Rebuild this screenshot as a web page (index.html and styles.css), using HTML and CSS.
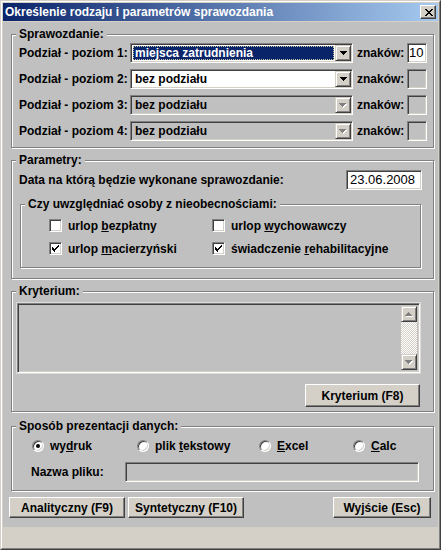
FILE: index.html
```html
<!DOCTYPE html>
<html lang="pl">
<head>
<meta charset="utf-8">
<title>Określenie rodzaju i parametrów sprawozdania</title>
<link rel="stylesheet" href="styles.css">
</head>
<body>
<div class="window">
  <div class="frame">
    <div class="titlebar">
      <span class="title">Określenie rodzaju i parametrów sprawozdania</span>
      <span class="close-btn"><svg width="8" height="7" viewBox="0 0 8 7"><path d="M0 0h2v1H0zM6 0h2v1H6zM1 1h2v1H1zM5 1h2v1H5zM2 2h4v1H2zM3 3h2v1H3zM2 4h4v1H2zM1 5h2v1H1zM5 5h2v1H5zM0 6h2v1H0zM6 6h2v1H6z" fill="#000"/></svg></span>
    </div>
    <div class="panel">
      <fieldset class="group g1">
        <legend>Sprawozdanie:</legend>
        <div class="level-row">
          <span class="level-label">Podział - poziom 1:</span>
          <div class="combo">
            <div class="combo-value selected"><span>miejsca zatrudnienia</span></div>
            <span class="combo-arrow"><svg width="7" height="4" viewBox="0 0 7 4"><path d="M0 0h7v1H0zM1 1h5v1H1zM2 2h3v1H2zM3 3h1v1H3z" fill="#000"/></svg></span>
          </div>
          <span class="chars-label">znaków:</span>
          <span class="field chars-field">10</span>
        </div>
        <div class="level-row">
          <span class="level-label">Podział - poziom 2:</span>
          <div class="combo">
            <div class="combo-value"><span>bez podziału</span></div>
            <span class="combo-arrow"><svg width="7" height="4" viewBox="0 0 7 4"><path d="M0 0h7v1H0zM1 1h5v1H1zM2 2h3v1H2zM3 3h1v1H3z" fill="#000"/></svg></span>
          </div>
          <span class="chars-label">znaków:</span>
          <span class="field chars-field disabled"></span>
        </div>
        <div class="level-row">
          <span class="level-label">Podział - poziom 3:</span>
          <div class="combo disabled">
            <div class="combo-value"><span>bez podziału</span></div>
            <span class="combo-arrow"><svg width="8" height="5" viewBox="0 0 8 5"><path d="M1 1h7v1H1zM2 2h5v1H2zM3 3h3v1H3zM4 4h1v1H4z" fill="#fff"/><path d="M0 0h7v1H0zM1 1h5v1H1zM2 2h3v1H2zM3 3h1v1H3z" fill="#808080"/></svg></span>
          </div>
          <span class="chars-label">znaków:</span>
          <span class="field chars-field disabled"></span>
        </div>
        <div class="level-row">
          <span class="level-label">Podział - poziom 4:</span>
          <div class="combo disabled">
            <div class="combo-value"><span>bez podziału</span></div>
            <span class="combo-arrow"><svg width="8" height="5" viewBox="0 0 8 5"><path d="M1 1h7v1H1zM2 2h5v1H2zM3 3h3v1H3zM4 4h1v1H4z" fill="#fff"/><path d="M0 0h7v1H0zM1 1h5v1H1zM2 2h3v1H2zM3 3h1v1H3z" fill="#808080"/></svg></span>
          </div>
          <span class="chars-label">znaków:</span>
          <span class="field chars-field disabled"></span>
        </div>
      </fieldset>

      <fieldset class="group g2">
        <legend>Parametry:</legend>
        <div class="date-row">
          <span>Data na którą będzie wykonane sprawozdanie:</span>
          <span class="field date-field">23.06.2008</span>
        </div>
        <fieldset class="group inner">
          <legend>Czy uwzględniać osoby z nieobecnościami:</legend>
          <div class="checks">
            <label class="check"><span class="box"></span><span class="opt-text">urlop <u>b</u>ezpłatny</span></label>
            <label class="check"><span class="box"></span><span class="opt-text">urlop <u>w</u>ychowawczy</span></label>
            <label class="check"><span class="box"><svg width="7" height="7" viewBox="0 0 7 7"><path d="M6 0h1v1H6zM5 1h2v1H5zM0 2h1v1H0zM4 2h2v1H4zM0 3h2v1H0zM3 3h2v1H3zM0 4h4v1H0zM1 5h2v1H1zM2 6h1v1H2z" fill="#000"/></svg></span><span class="opt-text">urlop <u>m</u>acierzyński</span></label>
            <label class="check"><span class="box"><svg width="7" height="7" viewBox="0 0 7 7"><path d="M6 0h1v1H6zM5 1h2v1H5zM0 2h1v1H0zM4 2h2v1H4zM0 3h2v1H0zM3 3h2v1H3zM0 4h4v1H0zM1 5h2v1H1zM2 6h1v1H2z" fill="#000"/></svg></span><span class="opt-text">świadczenie <u>r</u>ehabilitacyjne</span></label>
          </div>
        </fieldset>
      </fieldset>

      <fieldset class="group g3">
        <legend>Kryterium:</legend>
        <div class="listbox">
          <div class="list-area"></div>
          <div class="scrollbar">
            <span class="sb-btn"><svg width="8" height="5" viewBox="0 0 8 5"><path d="M4 1h1v1H4zM3 2h3v1H3zM2 3h5v1H2zM1 4h7v1H1z" fill="#fff"/><path d="M3 0h1v1H3zM2 1h3v1H2zM1 2h5v1H1zM0 3h7v1H0z" fill="#808080"/></svg></span>
            <span class="sb-track"></span>
            <span class="sb-btn"><svg width="8" height="5" viewBox="0 0 8 5"><path d="M1 1h7v1H1zM2 2h5v1H2zM3 3h3v1H3zM4 4h1v1H4z" fill="#fff"/><path d="M0 0h7v1H0zM1 1h5v1H1zM2 2h3v1H2zM3 3h1v1H3z" fill="#808080"/></svg></span>
          </div>
        </div>
        <div class="crit-row">
          <button class="btn crit-btn">Kryterium (F8)</button>
        </div>
      </fieldset>

      <fieldset class="group g4">
        <legend>Sposób prezentacji danych:</legend>
        <div class="radios">
          <label class="radio"><span class="dot on"></span><span class="opt-text">wy<u>d</u>ruk</span></label>
          <label class="radio"><span class="dot"></span><span class="opt-text">plik <u>t</u>ekstowy</span></label>
          <label class="radio"><span class="dot"></span><span class="opt-text"><u>E</u>xcel</span></label>
          <label class="radio"><span class="dot"></span><span class="opt-text"><u>C</u>alc</span></label>
        </div>
        <div class="file-row">
          <span class="file-label">Nazwa pliku:</span>
          <span class="field file-field disabled"></span>
        </div>
      </fieldset>

      <div class="buttons">
        <button class="btn w116">Analityczny (F9)</button>
        <button class="btn w116">Syntetyczny (F10)</button>
        <button class="btn exit-btn">Wyjście (Esc)</button>
      </div>
    </div>
  </div>
</div>
</body>
</html>
```

FILE: styles.css
```css
* { box-sizing: border-box; }

html, body {
  margin: 0;
  padding: 0;
  background: #d4d0c8;
}

body {
  font: bold 12px "Liberation Sans", Arial, sans-serif;
  color: #000;
}

.window {
  width: 441px;
  height: 550px;
  border: 1px solid;
  border-color: #d4d0c8 #404040 #404040 #d4d0c8;
  background: #d4d0c8;
  display: flex;
  flex-direction: column;
}

.frame {
  flex: 1;
  border: 1px solid;
  border-color: #fff #808080 #808080 #fff;
  padding: 1px;
  display: flex;
  flex-direction: column;
}

.titlebar {
  height: 18px;
  flex: none;
  background: linear-gradient(90deg, #0a246a 0%, #a6caf0 100%);
  color: #fff;
  display: flex;
  align-items: center;
  justify-content: space-between;
  padding: 0 2px 0 2px;
}

.title {
  font-weight: bold;
  font-size: 12px;
  line-height: 14px;
  white-space: nowrap;
}

.close-btn {
  width: 16px;
  height: 14px;
  background: #d4d0c8;
  border: 1px solid;
  border-color: #fff #404040 #404040 #fff;
  box-shadow: inset -1px -1px 0 #808080;
  display: flex;
  align-items: center;
  justify-content: center;
  padding-left: 1px;
}
.close-btn svg { display: block; }

.panel {
  margin-top: 1px;
  height: 505px;
  flex: none;
  background: #c0c0c0;
  padding: 0 4px 0 8px;
  display: flex;
  flex-direction: column;
}

/* group boxes */
.group {
  margin: 0;
  min-width: 0;
  border: 1px solid #808080;
  box-shadow: inset 1px 1px 0 #fff, 1px 1px 0 #fff;
}

.group legend {
  padding: 0 3px;
  margin-left: -3px;
  line-height: 13px;
  background: #c0c0c0;
  white-space: nowrap;
}

.g1 { margin-top: 6px; padding: 2px 6px 6px 7px; }
.g2 { margin-top: 6px; padding: 3px 11px 10px 7px; }
.g3 { margin-top: 6px; padding: 5px 13px 4px 5px; }
.g3 legend { margin-left: -1px; }
.g4 { margin-top: 8px; padding: 7px 13px 8px 7px; }
.inner { margin: 8px 1px 0; padding: 8px 7px 12px 7px; }

/* sunken fields */
.field {
  display: block;
  height: 20px;
  background: #fff;
  border: 1px solid;
  border-color: #808080 #fff #fff #808080;
  box-shadow: inset 1px 1px 0 #404040, inset -1px -1px 0 #d4d0c8;
  font-weight: normal;
  font-size: 13px;
  line-height: 18px;
}
.field.disabled { background: #c0c0c0; }

/* level rows */
.level-row {
  display: flex;
  align-items: center;
  height: 20px;
}
.level-row + .level-row { margin-top: 6px; }

.level-label {
  width: 111px;
  flex: none;
  white-space: nowrap;
}

.combo {
  width: 223px;
  height: 20px;
  flex: none;
  display: flex;
  padding: 1px;
  background: #fff;
  border: 1px solid;
  border-color: #808080 #fff #fff #808080;
  box-shadow: inset 1px 1px 0 #404040, inset -1px -1px 0 #d4d0c8;
}
.combo.disabled { background: #c0c0c0; }

.combo-value {
  flex: 1;
  padding: 1px;
  display: flex;
  min-width: 0;
}
.combo-value span {
  flex: 1;
  padding-left: 2px;
  line-height: 14px;
  white-space: nowrap;
}
.combo-value.selected span {
  background: #0a246a;
  color: #fff;
  outline: 1px dotted #c8c8a0;
  outline-offset: -1px;
}

.combo-arrow {
  width: 16px;
  height: 16px;
  flex: none;
  background: #d4d0c8;
  border: 1px solid;
  border-color: #d4d0c8 #404040 #404040 #d4d0c8;
  box-shadow: inset 1px 1px 0 #fff, inset -1px -1px 0 #808080;
  display: flex;
  align-items: center;
  justify-content: center;
}
.combo-arrow svg { display: block; }

.chars-label {
  margin-left: 4px;
  white-space: nowrap;
}
.chars-field {
  width: 20px;
  margin-left: auto;
  padding-left: 1px;
}

/* date row */
.date-row {
  display: flex;
  align-items: center;
  justify-content: space-between;
  height: 20px;
}
.date-field {
  width: 76px;
  padding-left: 3px;
}

/* checkboxes */
.checks {
  display: grid;
  grid-template-columns: 163px auto;
  row-gap: 10px;
  margin-left: 21px;
}
.check {
  display: flex;
  align-items: center;
  height: 13px;
}
.opt-text {
  white-space: nowrap;
}
.box {
  width: 13px;
  height: 13px;
  flex: none;
  margin-right: 6px;
  background: #fff;
  border: 1px solid;
  border-color: #808080 #fff #fff #808080;
  box-shadow: inset 1px 1px 0 #404040, inset -1px -1px 0 #d4d0c8;
  display: flex;
  align-items: center;
  justify-content: center;
}
.box svg { display: block; }

/* listbox */
.listbox {
  height: 70px;
  display: flex;
  padding: 2px;
  background: #c0c0c0;
  border: 1px solid;
  border-color: #808080 #fff #fff #808080;
  box-shadow: inset 1px 1px 0 #404040, inset -1px -1px 0 #d4d0c8, 0 0 0 1px #dcdcdc;
}
.list-area { flex: 1; }
.scrollbar {
  width: 16px;
  flex: none;
  display: flex;
  flex-direction: column;
}
.sb-btn {
  height: 16px;
  flex: none;
  background: #d4d0c8;
  border: 1px solid;
  border-color: #d4d0c8 #404040 #404040 #d4d0c8;
  box-shadow: inset 1px 1px 0 #fff, inset -1px -1px 0 #808080;
  display: flex;
  align-items: center;
  justify-content: center;
}
.sb-btn svg { display: block; }
.sb-track {
  flex: 1;
  background: repeating-conic-gradient(#fff 0 25%, #d4d0c8 0 50%) 0 0 / 2px 2px;
}

.crit-row {
  display: flex;
  justify-content: flex-end;
  margin-top: 11px;
}

/* buttons */
.btn {
  font: bold 12px "Liberation Sans", Arial, sans-serif;
  color: #000;
  background: #d4d0c8;
  border: 1px solid;
  border-color: #fff #404040 #404040 #fff;
  box-shadow: inset -1px -1px 0 #808080;
  padding: 0;
  margin: 0;
  height: 21px;
  white-space: nowrap;
}
.crit-btn { width: 115px; height: 23px; }
.w116 { width: 116px; }
.exit-btn { width: 98px; margin-left: auto; }

.buttons {
  display: flex;
  gap: 3px;
  margin: 6px 3px 0 -2px;
}

/* radios */
.radios {
  display: grid;
  grid-template-columns: 105px 122px 94px auto;
  margin-left: 13px;
  height: 12px;
}
.radio {
  display: flex;
  align-items: center;
  height: 12px;
  line-height: 12px;
}
.dot {
  width: 12px;
  height: 12px;
  flex: none;
  margin-right: 6px;
  border-radius: 50%;
  background: #fff;
  border: 1px solid;
  border-color: #808080 #fff #fff #808080;
  box-shadow: inset 1px 1px 0 #404040, inset -1px -1px 0 #d4d0c8;
  display: flex;
  align-items: center;
  justify-content: center;
}
.dot.on::after {
  content: "";
  width: 4px;
  height: 4px;
  border-radius: 50%;
  background: #000;
}

/* file row */
.file-row {
  display: flex;
  align-items: center;
  margin-top: 10px;
  padding-left: 12px;
}
.file-label {
  width: 94px;
  flex: none;
}
.file-field {
  width: 294px;
  flex: none;
}
```
